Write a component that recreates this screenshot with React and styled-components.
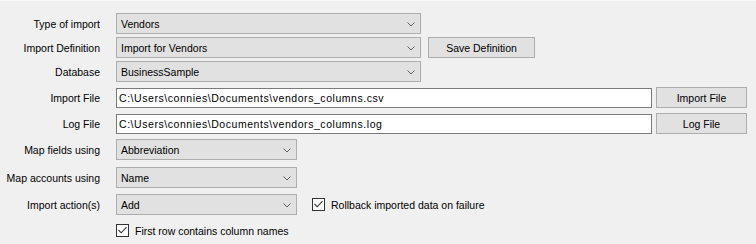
import React from 'react';
import styled, { createGlobalStyle } from 'styled-components';

const GlobalStyle = createGlobalStyle`
    html, body {
        margin: 0;
        padding: 0;
        background: #f0f0f0;
    }
    body {
        font-family: "Liberation Sans", Arial, sans-serif;
        font-size: 10.5px;
        color: #000;
    }
`;

const Form = styled.div`
    width: 756px;
    height: 244px;
    box-sizing: border-box;
    border-top: 1px solid #f9f9f9;
    padding-top: 12px;
    display: flex;
    flex-direction: column;
    background: #f0f0f0;
`;

const Row = styled.div`
    display: flex;
    align-items: center;
    height: ${({ $h }) => $h || 21}px;
    margin-top: ${({ $gap }) => $gap || 0}px;
`;

const Label = styled.div`
    width: 100px;
    margin-right: 16px;
    text-align: right;
    white-space: nowrap;
    flex-shrink: 0;
`;

const Spacer = styled.div`
    width: 116px;
    flex-shrink: 0;
`;

const ComboBox = styled.div`
    position: relative;
    box-sizing: border-box;
    width: ${({ $w }) => $w}px;
    height: 21px;
    display: flex;
    align-items: center;
    padding-left: 4px;
    background: #e1e1e1;
    border: 1px solid #adadad;
    flex-shrink: 0;
`;

const ComboArrow = styled.svg`
    position: absolute;
    right: 5px;
    top: 8px;
`;

const TextBox = styled.div`
    box-sizing: border-box;
    width: ${({ $w }) => $w}px;
    height: 20px;
    display: flex;
    align-items: center;
    padding-left: 2px;
    background: #fff;
    border: 1px solid #7a7a7a;
    flex-shrink: 0;
    white-space: nowrap;
    letter-spacing: 0.55px;
`;

const Button = styled.div`
    box-sizing: border-box;
    width: ${({ $w }) => $w}px;
    height: 21px;
    margin-left: ${({ $ml }) => $ml}px;
    display: flex;
    align-items: center;
    justify-content: center;
    background: #e1e1e1;
    border: 1px solid #adadad;
    flex-shrink: 0;
`;

const CheckRow = styled.label`
    display: flex;
    align-items: center;
    margin-left: ${({ $ml }) => $ml || 0}px;
    white-space: nowrap;
`;

const Box = styled.span`
    box-sizing: border-box;
    width: 13px;
    height: 13px;
    margin-right: 6px;
    display: flex;
    align-items: center;
    justify-content: center;
    background: #fff;
    border: 1px solid #333;
`;

function Combo({ width, value }) {
    return (
        <ComboBox $w={width}>
            {value}
            <ComboArrow width="8" height="5" viewBox="0 0 8 5">
                <path d="M0.5 0.5 L4 4 L7.5 0.5" fill="none" stroke="#606060" strokeWidth="1" />
            </ComboArrow>
        </ComboBox>
    );
}

function Check({ text, ml }) {
    return (
        <CheckRow $ml={ml}>
            <Box>
                <svg width="11" height="11" viewBox="0 0 11 11">
                    <path d="M1.5 5 L4.2 7.8 L9.5 2.2" fill="none" stroke="#333" strokeWidth="1.1" />
                </svg>
            </Box>
            {text}
        </CheckRow>
    );
}

export default function App() {
    return (
        <>
            <GlobalStyle />
            <Form>
                <Row>
                    <Label>Type of import</Label>
                    <Combo width={305} value="Vendors" />
                </Row>
                <Row $gap={3}>
                    <Label>Import Definition</Label>
                    <Combo width={305} value="Import for Vendors" />
                    <Button $w={107} $ml={7}>Save Definition</Button>
                </Row>
                <Row $gap={3}>
                    <Label>Database</Label>
                    <Combo width={305} value="BusinessSample" />
                </Row>
                <Row $gap={5}>
                    <Label>Import File</Label>
                    <TextBox $w={536}>C:\Users\connies\Documents\vendors_columns.csv</TextBox>
                    <Button $w={91} $ml={4}>Import File</Button>
                </Row>
                <Row $gap={5}>
                    <Label>Log File</Label>
                    <TextBox $w={536}>C:\Users\connies\Documents\vendors_columns.log</TextBox>
                    <Button $w={91} $ml={4}>Log File</Button>
                </Row>
                <Row $gap={5}>
                    <Label>Map fields using</Label>
                    <Combo width={181} value="Abbreviation" />
                </Row>
                <Row $gap={7}>
                    <Label>Map accounts using</Label>
                    <Combo width={181} value="Name" />
                </Row>
                <Row $gap={6}>
                    <Label>Import action(s)</Label>
                    <Combo width={181} value="Add" />
                    <Check ml={15} text="Rollback imported data on failure" />
                </Row>
                <Row $gap={7} $h={17}>
                    <Spacer />
                    <Check text="First row contains column names" />
                </Row>
            </Form>
        </>
    );
}
